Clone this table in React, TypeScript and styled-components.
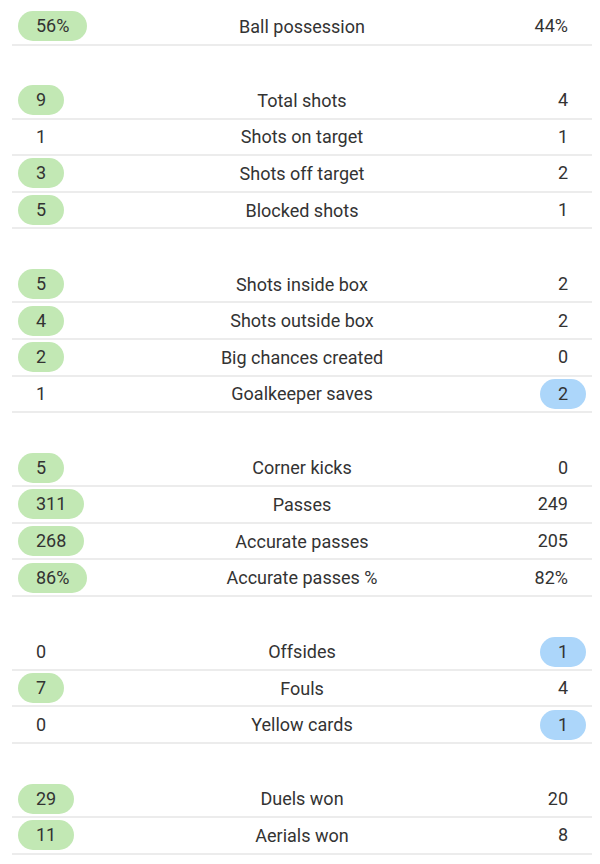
import React from "react";
import styled, { createGlobalStyle } from "styled-components";

const Global = createGlobalStyle`
  html, body { margin: 0; padding: 0; background: #ffffff; }
  body { font-family: Roboto, "Noto Sans", Arial, sans-serif; }
`;

const Page = styled.div`
  width: 580px;
  padding: 9px 8px 0 12px;
`;

const Group = styled.section`
  & + & { margin-top: 37.4px; }
`;

const Row = styled.div`
  box-sizing: border-box;
  height: 36.6px;
  display: grid;
  grid-template-columns: 1fr auto 1fr;
  align-items: center;
  padding: 0 6px;
  border-bottom: 2px solid #ececec;
  font-size: 18px;
  color: #333333;
`;

const Label = styled.div`
  text-align: center;
  white-space: nowrap;
`;

type Tone = "none" | "home" | "away";

const Value = styled.span<{ $tone: Tone; $side: "left" | "right" }>`
  justify-self: ${(p) => (p.$side === "left" ? "start" : "end")};
  display: inline-flex;
  align-items: center;
  justify-content: center;
  height: 30px;
  padding: 0 18px;
  border-radius: 15px;
  line-height: 1;
  background: ${(p) =>
    p.$tone === "home" ? "#c2e8b4" : p.$tone === "away" ? "#acd6fa" : "transparent"};
`;

type Stat = [string, string, string, Tone];

const groups: Stat[][] = [
  [["56%", "Ball possession", "44%", "home"]],
  [
    ["9", "Total shots", "4", "home"],
    ["1", "Shots on target", "1", "none"],
    ["3", "Shots off target", "2", "home"],
    ["5", "Blocked shots", "1", "home"],
  ],
  [
    ["5", "Shots inside box", "2", "home"],
    ["4", "Shots outside box", "2", "home"],
    ["2", "Big chances created", "0", "home"],
    ["1", "Goalkeeper saves", "2", "away"],
  ],
  [
    ["5", "Corner kicks", "0", "home"],
    ["311", "Passes", "249", "home"],
    ["268", "Accurate passes", "205", "home"],
    ["86%", "Accurate passes %", "82%", "home"],
  ],
  [
    ["0", "Offsides", "1", "away"],
    ["7", "Fouls", "4", "home"],
    ["0", "Yellow cards", "1", "away"],
  ],
  [
    ["29", "Duels won", "20", "home"],
    ["11", "Aerials won", "8", "home"],
  ],
];

export default function App() {
  return (
    <>
      <Global />
      <Page>
        {groups.map((g, gi) => (
          <Group key={gi}>
            {g.map(([home, label, away, tone]) => (
              <Row key={label}>
                <Value $side="left" $tone={tone === "home" ? "home" : "none"}>
                  {home}
                </Value>
                <Label>{label}</Label>
                <Value $side="right" $tone={tone === "away" ? "away" : "none"}>
                  {away}
                </Value>
              </Row>
            ))}
          </Group>
        ))}
      </Page>
    </>
  );
}
